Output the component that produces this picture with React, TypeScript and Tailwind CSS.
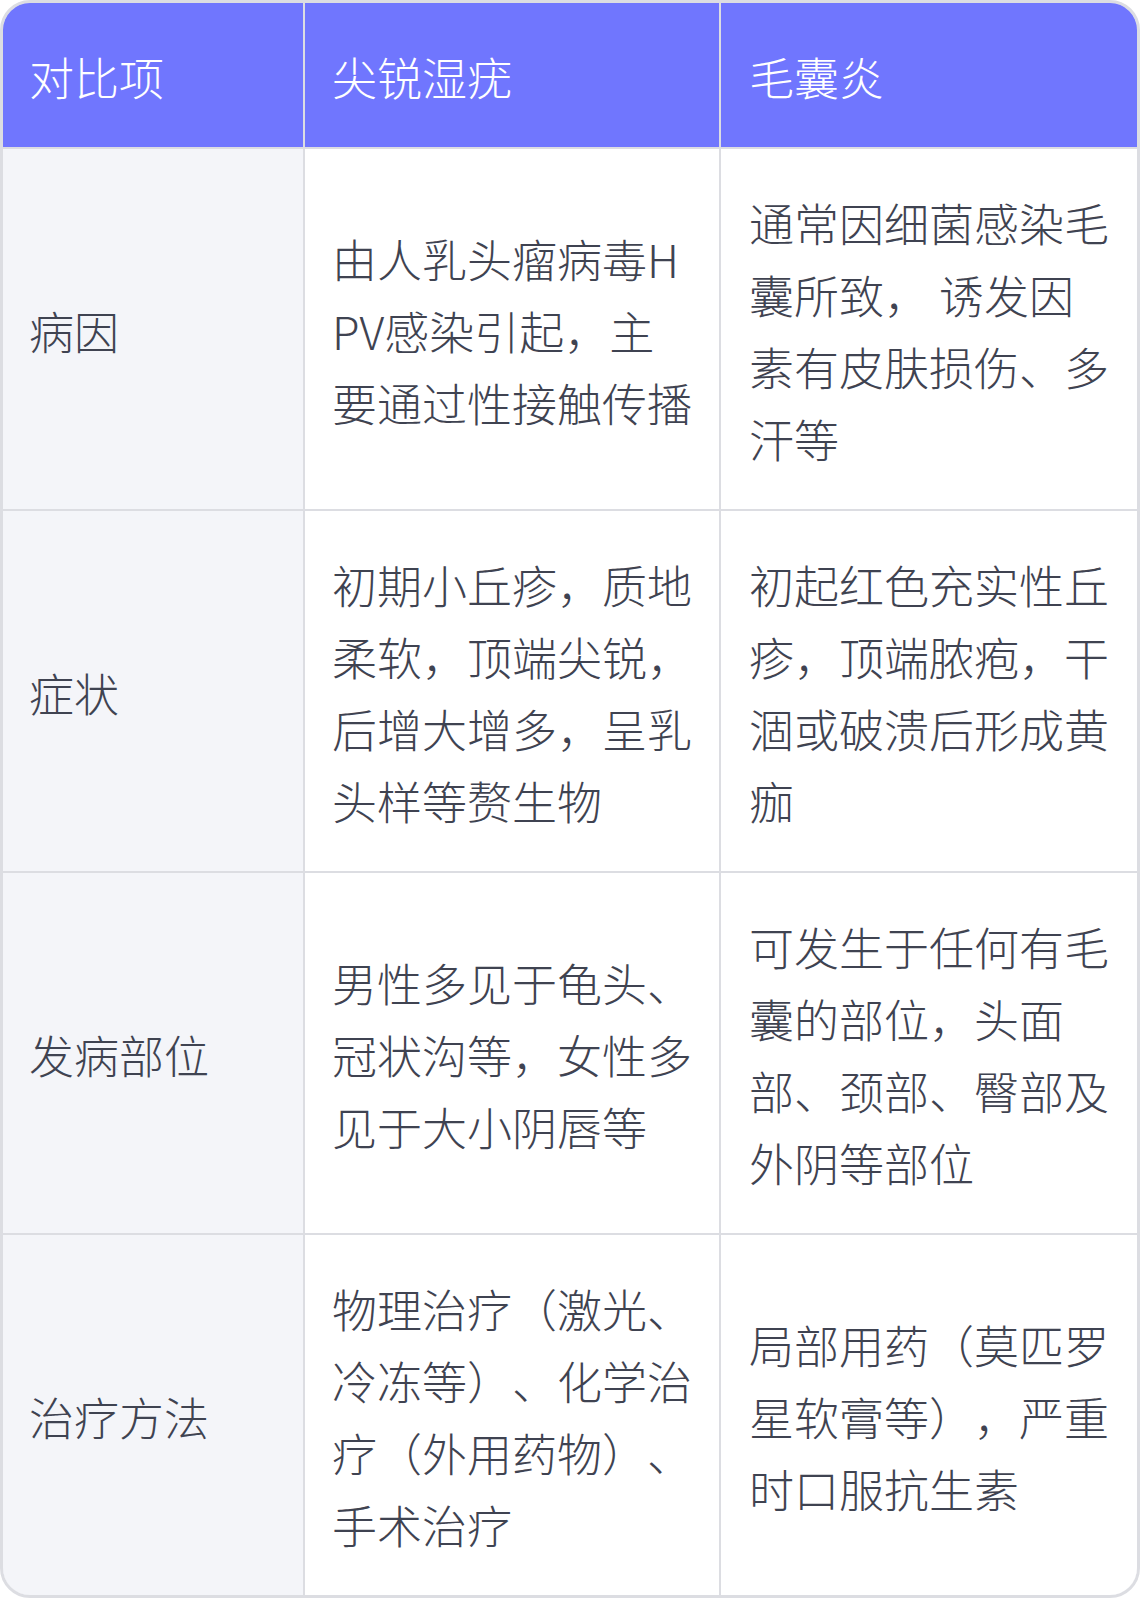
const rows: { label: string; a: string; b: string }[] = [
  {
    label: '病因',
    a: '由人乳头瘤病毒HPV感染引起，主要通过性接触传播',
    b: '通常因细菌感染毛囊所致， 诱发因素有皮肤损伤、多汗等',
  },
  {
    label: '症状',
    a: '初期小丘疹，质地柔软，顶端尖锐，后增大增多，呈乳头样等赘生物',
    b: '初起红色充实性丘疹，顶端脓疱，干涸或破溃后形成黄痂',
  },
  {
    label: '发病部位',
    a: '男性多见于龟头、冠状沟等，女性多见于大小阴唇等',
    b: '可发生于任何有毛囊的部位，头面部、颈部、臀部及外阴等部位',
  },
  {
    label: '治疗方法',
    a: '物理治疗（激光、冷冻等）、化学治疗（外用药物）、手术治疗',
    b: '局部用药（莫匹罗星软膏等），严重时口服抗生素',
  },
]

const font = { fontFamily: '"Noto Sans CJK SC Light", "Noto Sans CJK SC", "Noto Sans", sans-serif' }

export default function App() {
  return (
    <div className="w-[1140px] h-[1598px] bg-white" style={font}>
      <div className="border-[3px] border-[#dcdde2] rounded-[30px] overflow-hidden">
        <div className="grid grid-cols-[300px_414px_416px] gap-[2px] bg-[#dcdde2] text-[45px] leading-[72px] font-light [text-spacing-trim:space-all]">
          <div className="h-[144px] bg-[#7076fe] text-white flex items-center pl-[26px] pt-[4px]">对比项</div>
          <div className="h-[144px] bg-[#7076fe] text-white flex items-center pl-[27px] pt-[4px]">尖锐湿疣</div>
          <div className="h-[144px] bg-[#7076fe] text-white flex items-center pl-[28px] pt-[4px]">毛囊炎</div>
          {rows.map((r) => (
            <div key={r.label} className="contents">
              <div className="h-[360px] bg-[#f4f5f9] text-[#3f4351] flex items-center pl-[26px] pt-[4px]">{r.label}</div>
              <div className="h-[360px] bg-white text-[#3f4351] flex items-center pl-[27px] pr-[26px] pt-[4px] break-all">{r.a}</div>
              <div className="h-[360px] bg-white text-[#3f4351] flex items-center pl-[28px] pr-[25px] pt-[4px]">{r.b}</div>
            </div>
          ))}
        </div>
      </div>
    </div>
  )
}
